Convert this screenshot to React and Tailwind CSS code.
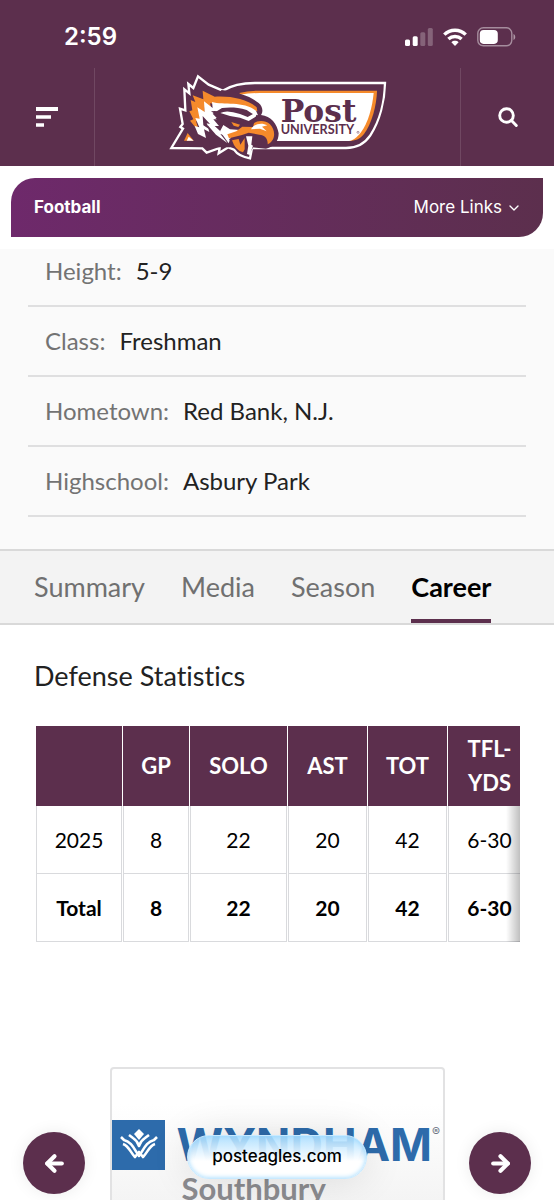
import { ArrowLeft, ArrowRight, ChevronDown } from "lucide-react";

const details = [
  ["Height:", "5-9"],
  ["Class:", "Freshman"],
  ["Hometown:", "Red Bank, N.J."],
  ["Highschool:", "Asbury Park"],
];

const tabs = ["Summary", "Media", "Season", "Career"];

const rows = [
  ["2025", "8", "22", "20", "42", "6-30"],
  ["Total", "8", "22", "20", "42", "6-30"],
];

function StatusBar() {
  return (
    <div className="flex h-[68px] items-center justify-between pt-1.5 pr-[38px] pl-16 text-white">
      <span className="text-2xl font-semibold">2:59</span>
      <div className="flex items-center gap-2.5">
        <svg width="28" height="18" viewBox="0 0 28 18" fill="#fff" aria-hidden="true">
          <rect x="0" y="11.5" width="5" height="6.5" rx="1.5" />
          <rect x="7.7" y="8.3" width="5" height="9.7" rx="1.5" />
          <rect x="15.3" y="4.2" width="5" height="13.8" rx="1.5" opacity=".25" />
          <rect x="22.8" y="0" width="5" height="18" rx="1.5" opacity=".25" />
        </svg>
        <svg width="24" height="18" viewBox="0 0 24 18" fill="none" stroke="#fff" strokeWidth="3.4" aria-hidden="true">
          <path d="M1.3 6.600C7.200.800 16.800.800 22.700 6.600" />
          <path d="M5.400 11c3.700-3.400 9.500-3.400 13.200 0" />
          <path d="M12 18 8.400 14.200c2-1.800 5.200-1.800 7.200 0Z" fill="#fff" stroke="none" />
        </svg>
        <svg width="39" height="20" viewBox="0 0 39 20" aria-hidden="true">
          <rect x=".8" y=".8" width="34" height="18" rx="5.500" fill="none" stroke="#fff" strokeOpacity=".45" strokeWidth="1.400" />
          <rect x="2.800" y="2.900" width="18" height="14" rx="3.800" fill="#fff" />
          <path d="M36.500 7c2.300 1 2.300 5 0 6Z" fill="#fff" opacity=".5" />
        </svg>
      </div>
    </div>
  );
}

function PostLogo() {
  return (
    <svg width="230" height="100" viewBox="0 0 690 300" role="img" aria-label="Post University">
      <path
        d="M34 246 69 188 61 183 68 174 60 128 76 133 73 70 88 82 85 54 100 66 114 31 146 56 188 74C216 57 250 51 285 51H675C674 105 659 165 631 208 612 236 588 246 558 246H276L270 277C252 274 234 269 222 251L205 244 176 262 179 246 140 260 127 247Z"
        fill="#5c2f4d" stroke="#fff" strokeWidth="7" strokeLinejoin="miter" />
      <path d="M238 81Q265 74 300 74H651C650 117 636 171 612 204 600 219 585 225 566 225H300Z" fill="#f58a2b" />
      <path d="M240 86Q268 81 300 81H641C637 123 625 170 602 200 590 214 579 225 561 225H300Z" fill="#fff" />
      <path d="M72 224 83 201 101 224Z" fill="#f58a2b" />
      <path d="M80 224 86 212 101 224Z" fill="#fff" />
      <path d="M185 72C230 77 273 91 296 111 310 123 309 139 303 147 333 150 352 174 356 202 356 226 343 242 318 248L278 244 150 244 130 120Z" fill="#5c2f4d" />
      <path d="M128 74 164 92C211 89 262 99 290 124L292 136C262 122 230 116 196 118L150 112 156 134 134 124 134 142 116 136 122 166 108 166 118 198 90 164 100 160 88 136 97 133 92 102 106 108 98 88 130 100Z" fill="#f58a2b" />
      <path d="M132 106 158 126 156 108C190 118 250 104 288 134L294 148 277 143 260 132C231 123 206 124 186 126L158 143 174 160 160 160 177 180 164 180 194 208 181 204 203 232 168 206 142 176 148 198 132 190 138 216 114 204 104 180 118 184 106 156 119 158 112 124 134 138Z" fill="#fff" />
      <path d="M128 150 150 174 140 172 148 190 130 178Z" fill="#5c2f4d" />
      <path d="M153 136Q177 132 198 144L240 151 260 160 285 154 297 147 282 164 260 173 241 163 213 155 198 162 205 184 187 178 166 156 183 156Z" fill="#5c2f4d" />
      <path d="M181 141Q200 130 240 144L263 153 279 144 291 142 287 152 266 165 240 155 210 150Z" fill="#fff" />
      <path d="M190 156 220 158 254 177 242 191 220 184 205 174Z" fill="#5c2f4d" />
      <path d="M214 168 240 176 235 183 221 179Z" fill="#f58a2b" />
      <path d="M190 177 210 190 240 192 213 212 206 232 180 196Z" fill="#fff" />
      <path d="M202 205 229 196 247 182 279 183 282 172C294 162 317 163 330 175 348 194 347 223 323 235 324 218 314 207 298 206L266 200 246 207 207 217Z" fill="#f58a2b" />
      <path d="M273 190C283 173 305 169 322 178L306 182 320 196 300 188Z" fill="#fff" />
      <path d="M207 219 233 213 258 208 280 206 291 214 283 238 267 265 247 264 222 245Z" fill="#5c2f4d" />
      <path d="M216 223 236 219 241 236 254 216 254 250 249 259Q226 254 216 223Z" fill="#f58a2b" />
      <path d="M258 211 277 211 274 236 279 239 269 267 261 264 265 239Z" fill="#fff" />
      <text x="362" y="167" fill="#5c2f4d" fontFamily="DejaVu Serif, serif" fontWeight="700" fontSize="94">Post</text>
      <text x="362" y="203" fill="#5c2f4d" fontFamily="Lato, sans-serif" fontWeight="700" fontSize="38">UNIVERSITY</text>
      <circle cx="594" cy="199" r="3" fill="none" stroke="#5c2f4d" strokeWidth="1.500" />
    </svg>
  );
}

function Header() {
  return (
    <header className="bg-[#5c2f4d]">
      <StatusBar />
      <div className="flex h-[98px] items-stretch">
        <button aria-label="Menu" className="flex w-[95px] items-center justify-center border-r border-[#704862]">
          <svg width="22" height="20" viewBox="0 0 22 20" fill="#fff" aria-hidden="true">
            <path d="M0 0h22v4H0zM0 8.200h15v3.600H0zM0 16.200h8v3.600H0z" />
          </svg>
        </button>
        <a href="#home" className="-mt-0.5 flex flex-1 justify-center pr-1.5">
          <PostLogo />
        </a>
        <button aria-label="Search" className="flex w-[94px] items-center justify-center border-l border-[#704862]">
          <svg width="20" height="20" viewBox="0 0 20 20" fill="none" stroke="#fff" strokeWidth="2.900" strokeLinecap="round" aria-hidden="true">
            <circle cx="8.500" cy="8.500" r="6.800" />
            <path d="m13.500 13.500 4.800 4.900" />
          </svg>
        </button>
      </div>
    </header>
  );
}

function StatsTable() {
  const cell = "border border-t-0 border-[#d9dadd]";
  return (
    <div className="relative mr-[34px] ml-[35px] overflow-hidden">
      <table className="w-[497px] table-fixed border-separate border-spacing-x-px border-spacing-y-0 text-center font-[Lato,sans-serif]">
        <colgroup>
          <col className="w-[86px]" />
          <col className="w-[66px]" />
          <col className="w-[97px]" />
          <col className="w-[79px]" />
          <col className="w-[79px]" />
          <col />
        </colgroup>
        <thead>
          <tr className="h-20 text-[22px] leading-[34px] text-white">
            {["", "GP", "SOLO", "AST", "TOT", "TFL- YDS"].map((h) => (
              <th key={h} scope="col" className="bg-[#5c2f4d] px-3.5 font-bold">
                {h}
              </th>
            ))}
          </tr>
        </thead>
        <tbody className="text-[21px] text-black">
          {rows.map((r, i) => (
            <tr key={r[0]} className={i === 1 ? "h-[68px] font-bold" : "h-[68px]"}>
              {r.map((c, j) => (
                <td key={j} className={cell}>
                  {c}
                </td>
              ))}
            </tr>
          ))}
        </tbody>
      </table>
      <div className="absolute top-20 right-0 bottom-0 w-3.5 bg-linear-to-r from-transparent to-black/25" />
    </div>
  );
}

const roundButton =
  "mt-[65px] flex size-[62px] items-center justify-center rounded-full bg-[#5c2f4d] text-white shadow-[0_0_16px_rgba(0,0,0,0.08)]";

function Sponsor() {
  return (
    <section className="relative mt-[125px] flex min-h-0 flex-1 items-start justify-between overflow-hidden px-[23px]">
      <button aria-label="Previous sponsor" className={roundButton}>
        <ArrowLeft size={25} strokeWidth={4} />
      </button>
      <a href="#wyndham" className="block h-[180px] w-[335px] overflow-hidden rounded border-2 border-[#e2e2e3] bg-linear-to-b from-white from-20% to-[#efefef]">
        <span className="mt-[51px] flex items-start">
          <svg width="53" height="50" viewBox="0 0 53 50" className="shrink-0" aria-hidden="true">
            <path d="M0 0h53v50H0z" fill="#2d6bab" />
            <g fill="none" stroke="#fff" strokeWidth="2.600" strokeLinejoin="round">
              <path d="m9 17 3 3c8 2 10 9 15 16 5-7 7-14 15-16l3-3" />
              <path d="M11 24c6 2 7 8 12 13l4-5 4 5c5-5 6-11 12-13" />
              <path d="m17 15 4 3c3 2 5 5 6 8 1-3 3-6 6-8l4-3" />
            </g>
            <path d="m27 9 5 5-5 6-5-6Z" fill="#fff" />
          </svg>
          <span className="ml-3 font-[Inter,sans-serif] text-[45px] leading-[50px] font-bold text-[#2d6bab]">WYNDHAM</span>
          <sup className="top-0 mt-1 text-xs leading-4 text-gray-500">®</sup>
        </span>
        <span className="ml-[70px] block font-[Lato,sans-serif] text-[31px] leading-9 font-bold text-[#8b8b8f]">Southbury</span>
      </a>
      <button aria-label="Next sponsor" className={roundButton}>
        <ArrowRight size={25} strokeWidth={4} />
      </button>
      <div className="absolute inset-x-0 top-[68px] flex justify-center">
        <button className="h-11 rounded-full border border-[#c9eaff] bg-linear-to-b from-[#a5dcff]/85 to-white to-60% px-6 text-[17px] font-medium text-black shadow-[0_0_40px_rgba(0,0,0,0.12),inset_0_0_5px_#9bd8ff]">
          posteagles.com
        </button>
      </div>
    </section>
  );
}

export default function App() {
  return (
    <div className="flex h-screen flex-col overflow-hidden bg-white font-[Inter,sans-serif]">
      <Header />
      <nav className="mx-[11px] my-3 flex h-[59px] shrink-0 items-center justify-between rounded-tl-3xl rounded-br-3xl bg-linear-to-r from-[#6e296b] to-[#5c2f4d] pr-[21px] pl-[23px] text-[17px] text-white">
        <a href="#football" className="font-bold">Football</a>
        <button className="flex items-center gap-1">
          More Links
          <ChevronDown size={16} strokeWidth={2} />
        </button>
      </nav>
      <section className="bg-[#fafafa] px-7 pb-8 font-[Lato,sans-serif] text-2xl">
        <dl className="-mt-3">
          {details.map(([k, v]) => (
            <div key={k} className="flex h-[70px] items-center gap-3.5 border-b-2 border-[#dfdfe0] px-[17px]">
              <dt className="text-[#737373]">{k}</dt>
              <dd className="text-[#222]">{v}</dd>
            </div>
          ))}
        </dl>
      </section>
      <nav className="flex h-[76px] shrink-0 items-stretch gap-9 border-y-2 border-[#d9d9d9] bg-[#f3f3f3] px-[34px] font-[Lato,sans-serif] text-[27px]">
        {tabs.map((t) => (
          <a
            key={t}
            href={"#" + t.toLowerCase()}
            className={
              t === "Career"
                ? "flex items-center border-b-4 border-[#5c2f4d] pt-1 font-bold text-black"
                : "flex items-center text-[#707070]"
            }
          >
            {t}
          </a>
        ))}
      </nav>
      <h2 className="mt-[31px] mb-[30px] px-[34px] font-[Lato,sans-serif] text-[27px] leading-10 text-[#222] [font-variant-ligatures:none]">
        Defense Statistics
      </h2>
      <StatsTable />
      <Sponsor />
    </div>
  );
}
